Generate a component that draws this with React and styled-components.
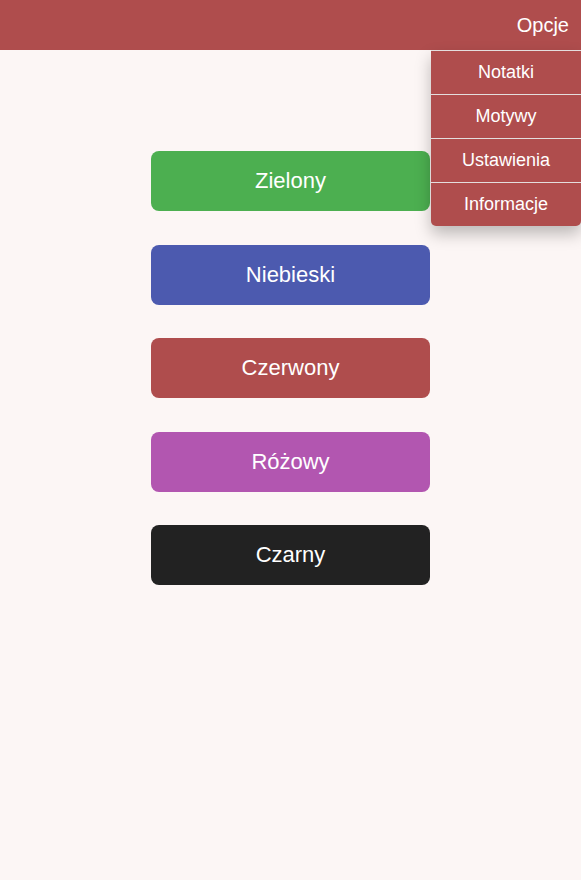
import React from "react";
import styled, { createGlobalStyle } from "styled-components";

const GlobalStyle = createGlobalStyle`
  html, body {
    margin: 0;
    padding: 0;
    background-color: #fcf6f5;
    font-family: "Liberation Sans", Arial, sans-serif;
  }
`;

const Page = styled.div`
  min-height: 880px;
  background-color: #fcf6f5;
`;

const Header = styled.header`
  position: relative;
  height: 50px;
  display: flex;
  justify-content: flex-end;
  align-items: center;
  padding-right: 12px;
  background-color: #af4d4d;
`;

const MenuLabel = styled.span`
  font-size: 20px;
  color: #fff;
`;

const Dropdown = styled.ul`
  position: absolute;
  top: 50px;
  right: 0;
  width: 150px;
  margin: 0;
  padding: 0;
  list-style: none;
  background-color: #af4d4d;
  border-radius: 0 0 5px 5px;
  box-shadow: 0 8px 16px rgba(0, 0, 0, 0.25);
  z-index: 2;
`;

const DropdownItem = styled.li`
  height: 43px;
  display: flex;
  align-items: center;
  justify-content: center;
  border-top: 1px solid #e4dede;
  font-size: 18px;
  color: #fff;
`;

const ThemeList = styled.main`
  display: flex;
  flex-direction: column;
  align-items: center;
  gap: 33.5px;
  padding-top: 101px;
`;

const ThemeButton = styled.button`
  width: 279px;
  height: 60px;
  border: 0;
  border-radius: 8px;
  background-color: ${({ color }) => color};
  color: #fff;
  font-family: "Liberation Sans", Arial, sans-serif;
  font-size: 22px;
`;

const themes = [
  { name: "Zielony", color: "#4caf50" },
  { name: "Niebieski", color: "#4c5aaf" },
  { name: "Czerwony", color: "#af4d4d" },
  { name: "Różowy", color: "#b256b0" },
  { name: "Czarny", color: "#222222" },
];

const options = ["Notatki", "Motywy", "Ustawienia", "Informacje"];

const App = () => {
  return (
    <Page>
      <GlobalStyle />
      <Header>
        <MenuLabel>Opcje</MenuLabel>
        <Dropdown>
          {options.map((opt) => (
            <DropdownItem key={opt}>{opt}</DropdownItem>
          ))}
        </Dropdown>
      </Header>
      <ThemeList>
        {themes.map((t) => (
          <ThemeButton key={t.name} color={t.color}>
            {t.name}
          </ThemeButton>
        ))}
      </ThemeList>
    </Page>
  );
};

export default App;
